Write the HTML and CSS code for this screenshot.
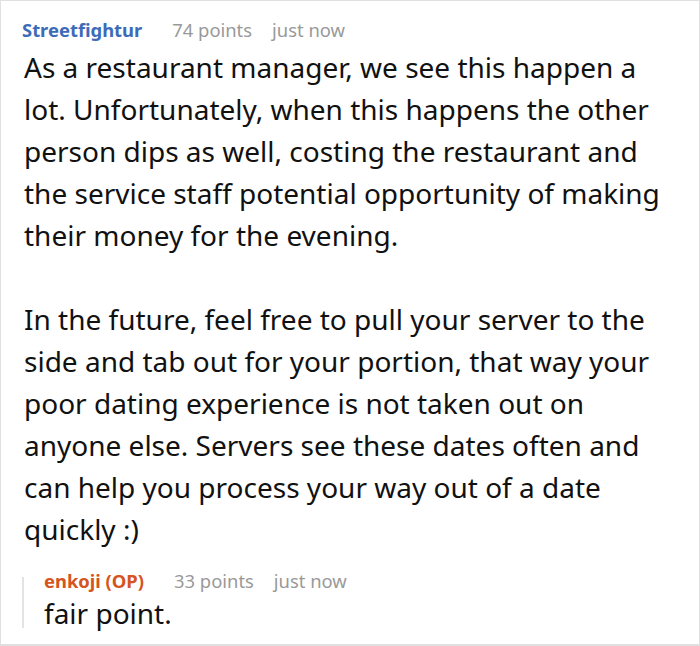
FILE: index.html
```html
<!DOCTYPE html>
<html>
<head>
<meta charset="utf-8">
<link rel="stylesheet" href="styles.css">
</head>
<body>
<div class="thread">
  <div class="comment">
    <div class="meta">
      <span class="author">Streetfightur</span>
      <span class="info">74 points</span>
      <span class="info">just now</span>
    </div>
    <div class="body">
      <p>As a restaurant manager, we see this happen a lot. Unfortunately, when this happens the other person dips as well, costing the restaurant and the service staff potential opportunity of making their money for the evening.</p>
      <p>In the future, feel free to pull your server to the side and tab out for your portion, that way your poor dating experience is not taken out on anyone else. Servers see these dates often and can help you process your way out of a date quickly :)</p>
    </div>
    <div class="reply">
      <div class="reply-bar"></div>
      <div class="reply-content">
        <div class="meta">
          <span class="author op">enkoji (OP)</span>
          <span class="info">33 points</span>
          <span class="info">just now</span>
        </div>
        <div class="body"><p>fair point.</p></div>
      </div>
    </div>
  </div>
</div>
</body>
</html>
```
FILE: styles.css
```css
html, body { margin: 0; padding: 0; background: #fff; }
body { font-family: "Noto Sans", sans-serif; }
.thread {
  width: 700px;
  height: 646px;
  box-sizing: border-box;
  border: 1px solid #e0e0e0;
  border-bottom-width: 2px;
  padding: 16px 30px 0 21px;
  overflow: hidden;
}
.meta {
  display: flex;
  gap: 20px;
  font-size: 18.4px;
  line-height: 26px;
}
.author { font-weight: 700; color: #3c6bb8; margin-right: 10px; }
.author.op { color: #d55420; }
.info { color: #999; }
.body { font-size: 28px; line-height: 42px; color: #111; }
.body p { margin: 0 0 42px 0; }
.body p:last-child { margin-bottom: 0; }
.comment > .body { margin-top: 3px; padding-left: 2px; }
.reply {
  margin-top: 18px;
  display: flex;
}
.reply-bar {
  width: 2px;
  margin: 9px 0 4px;
  background: #e3e3e3;
}
.reply-content { padding-left: 20px; }
.reply .body { line-height: 38px; }
```
